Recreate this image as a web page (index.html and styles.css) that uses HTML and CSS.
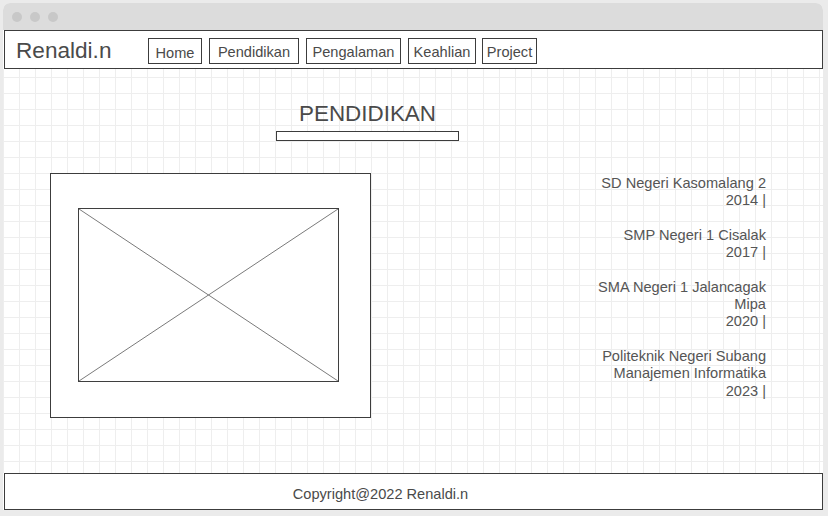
FILE: index.html
```html
<!DOCTYPE html>
<html lang="id">
<head>
<meta charset="utf-8">
<title>Renaldi.n - Pendidikan</title>
<link rel="stylesheet" href="styles.css">
</head>
<body>
<div class="window">
  <div class="titlebar">
    <span class="dot"></span><span class="dot"></span><span class="dot"></span>
  </div>
  <header class="header">
    <div class="logo">Renaldi.n</div>
    <nav class="nav">
      <a class="nav-btn nav-home">Home</a>
      <a class="nav-btn nav-pendidikan">Pendidikan</a>
      <a class="nav-btn nav-pengalaman">Pengalaman</a>
      <a class="nav-btn nav-keahlian">Keahlian</a>
      <a class="nav-btn nav-project">Project</a>
    </nav>
  </header>
  <main class="main">
    <section class="title-block">
      <h1 class="title">PENDIDIKAN</h1>
      <div class="title-bar"></div>
    </section>
    <section class="content">
      <div class="image-frame">
        <svg class="placeholder" width="261" height="174" viewBox="0 0 261 174">
          <line x1="1" y1="1" x2="260" y2="173" stroke="#7a7a7a" stroke-width="1"/>
          <line x1="260" y1="1" x2="1" y2="173" stroke="#7a7a7a" stroke-width="1"/>
          <rect x="0.5" y="0.5" width="260" height="173" fill="none" stroke="#3f3f3f" stroke-width="1"/>
        </svg>
      </div>
      <div class="edu-list">
        <p class="edu-item">SD Negeri Kasomalang 2<br>2014 |</p>
        <p class="edu-item">SMP Negeri 1 Cisalak<br>2017 |</p>
        <p class="edu-item">SMA Negeri 1 Jalancagak Mipa<br>2020 |</p>
        <p class="edu-item">Politeknik Negeri Subang<br>Manajemen Informatika<br>2023 |</p>
      </div>
    </section>
  </main>
  <footer class="footer">Copyright@2022 Renaldi.n</footer>
</div>
</body>
</html>
```

FILE: styles.css
```css
* { box-sizing: border-box; }

html, body {
  margin: 0;
  padding: 0;
}

body {
  background: #ebebeb;
  font-family: "Liberation Sans", Arial, sans-serif;
  color: #4a4a4a;
  width: 828px;
  height: 516px;
  overflow: hidden;
}

.window {
  margin: 3px 0 0 3px;
  width: 820px;
  height: 507px;
  border-radius: 7px 7px 0 0;
  overflow: hidden;
  background: #ffffff;
  display: flex;
  flex-direction: column;
}

.titlebar {
  height: 27px;
  background: #dcdcdc;
  display: flex;
  align-items: center;
  gap: 8px;
  padding: 0 0 0 9px;
}

.dot {
  width: 10px;
  height: 10px;
  border-radius: 50%;
  background: #c8c8c8;
}

.header {
  height: 39px;
  margin-left: 1px;
  border: 1px solid #3c3c3c;
  background: #fff;
  display: flex;
  align-items: center;
  padding-left: 11px;
}

.logo {
  font-size: 22.6px;
  color: #4a4a4a;
  width: 132px;
  line-height: 26px;
  margin-top: 2px;
}

.nav {
  display: flex;
  align-items: center;
  gap: 7px;
  margin-top: 2px;
}

.nav-btn {
  display: flex;
  align-items: center;
  justify-content: center;
  height: 26px;
  border: 1px solid #3c3c3c;
  font-size: 14.6px;
  color: #4a4a4a;
  text-decoration: none;
  white-space: nowrap;
  padding-top: 2px;
}

.nav-home { width: 54px; padding-top: 4px; }
.nav-pendidikan { width: 90px; }
.nav-pengalaman { width: 95px; }
.nav-keahlian { width: 68px; }
.nav-project { width: 55px; margin-left: -1px; }

.main {
  flex: 1;
  background-color: #ffffff;
  background-image:
    linear-gradient(to right, #eeeeee 1px, transparent 1px),
    linear-gradient(to bottom, #eeeeee 1px, transparent 1px);
  background-size: 16px 16px;
  background-position: 0 8px;
  display: flex;
  flex-direction: column;
  padding-top: 32px;
}

.title-block {
  width: 183px;
  margin-left: 273px;
}

.title {
  margin: 0;
  font-size: 22.4px;
  font-weight: normal;
  line-height: 26px;
  text-align: center;
  color: #4a4a4a;
}

.title-bar {
  margin-top: 4px;
  height: 10px;
  border: 1px solid #3c3c3c;
  background: #fff;
}

.content {
  display: flex;
  align-items: flex-start;
  margin-top: 32px;
  padding-left: 47px;
}

.image-frame {
  width: 321px;
  height: 245px;
  border: 1px solid #3c3c3c;
  background: #fff;
  padding: 34px 0 0 27px;
}

.placeholder {
  display: block;
}

.edu-list {
  margin-left: auto;
  margin-right: 57px;
  margin-top: 2px;
  width: 180px;
  text-align: right;
  font-size: 14.6px;
  line-height: 17.3px;
  color: #555555;
}

.edu-item {
  margin: 0 0 17.3px 0;
}

.footer {
  height: 37px;
  margin-left: 1px;
  border: 1px solid #3c3c3c;
  background: #fff;
  font-size: 14.6px;
  color: #4a4a4a;
  text-align: center;
  padding: 12px 66px 0 0;
  line-height: 17px;
}
```
